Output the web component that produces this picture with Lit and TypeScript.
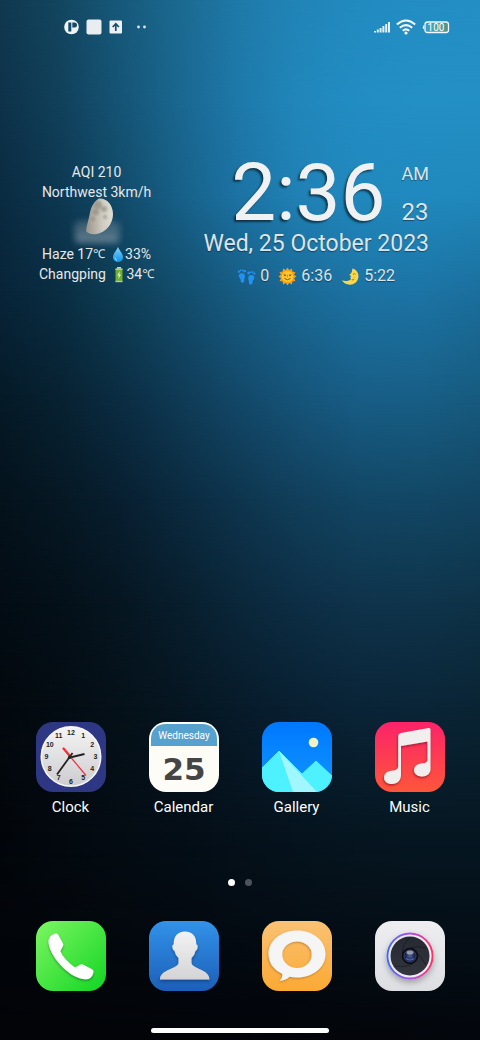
import { LitElement, html, svg, css } from "lit";
import { customElement, property } from "lit/decorators.js";

/* Horizontal colour rows of the wallpaper; each fades into the next one down the screen. */
const WALLPAPER: { at: number; colors: string[] }[] = [
  { at: 0, colors: ["#10384f", "#134660", "#17597b", "#1b6a91", "#1f7aa9", "#2185b8", "#228bc0", "#238ec3", "#238fc4"] },
  { at: 10, colors: ["#0d3249", "#11405b", "#155475", "#1a6790", "#1e79aa", "#2187bb", "#228dc3", "#238fc5", "#238fc4"] },
  { at: 19, colors: ["#0a2b41", "#0d3851", "#124b6a", "#176088", "#1c73a4", "#2081b5", "#2188bd", "#2089be", "#2088bb"] },
  { at: 28, colors: ["#082439", "#0a2e43", "#0e3e56", "#134d6c", "#175d84", "#1a6a96", "#1c73a3", "#1c74a5", "#1b6f9d"] },
  { at: 38, colors: ["#051a27", "#082232", "#0b2d43", "#0f3b56", "#13496a", "#16557b", "#185e87", "#185f87", "#175b7f"] },
  { at: 48, colors: ["#04121c", "#061824", "#081f30", "#0b2a3f", "#0e354e", "#113f5b", "#124664", "#124765", "#124562"] },
  { at: 58, colors: ["#030c14", "#041019", "#061621", "#081e2d", "#0b273a", "#0d2e45", "#0f334b", "#0f344b", "#0e3247"] },
  { at: 68, colors: ["#03090e", "#040c13", "#051119", "#061621", "#071b2a", "#092032", "#0a2437", "#0a2537", "#0a2434"] },
  { at: 80, colors: ["#02060b", "#03090f", "#040c13", "#040e17", "#05111b", "#05141f", "#061621", "#061722", "#061722"] },
  { at: 100, colors: ["#020408", "#020408", "#020409", "#03050a", "#03060c"] },
];

@customElement("wall-paper")
export class WallPaper extends LitElement {
  static styles = css`
    :host { display: grid; }
    .row { grid-area: 1 / 1; }
  `;
  render() {
    return WALLPAPER.map((row, i) => {
      const from = i ? WALLPAPER[i - 1].at : 0;
      const mask = i ? `linear-gradient(to bottom, transparent ${from}%, #000 ${row.at}%)` : "none";
      return html`<div class="row" style="background:linear-gradient(to right, ${row.colors.join(",")});mask-image:${mask}"></div>`;
    });
  }
}

const drop = svg`<svg viewBox="0 0 12 17"><defs><linearGradient id="dr" x2="0" y2="1"><stop stop-color="#7fd3fb"/><stop offset="1" stop-color="#0f92e6"/></linearGradient></defs><path fill="url(#dr)" d="M6 1C7 4 11 7.500 11 11.200A5 5 0 0 1 1 11.200C1 7.500 5 4 6 1z"/><path d="M3 11.500q.2 2.300 2 3" fill="none" stroke="#a9e4ff" stroke-width="1"/></svg>`;
const battery = svg`<svg viewBox="0 0 12 17"><rect x="4" y="1" width="4" height="2" fill="#c9d0d2"/><rect x="2.500" y="2.500" width="7" height="13.500" rx="1" fill="#6fae2f"/><rect x="2.500" y="2.500" width="7" height="1.500" fill="#b8c4b5"/><rect x="2.500" y="14.800" width="7" height="1.400" fill="#b8c4b5"/><path d="M6.500 5 4.400 9.500h1.500L5.400 13 7.900 8.400H6.300z" fill="#f2fadb"/></svg>`;
const feet = svg`<svg viewBox="0 0 20 20"><g fill="#2491ee"><path d="M2 8.200C3.500 5.800 7.300 6 8.200 8.500c.7 2-.6 3.200-.5 5 .1 2-.7 3-2 3s-2-1.200-1.900-2.900C3.900 11.700 1.200 10.600 2 8.200z"/><circle cx="2" cy="5" r="1.200"/><circle cx="3.900" cy="3.600" r="1"/><circle cx="5.700" cy="3.400" r=".9"/><circle cx="8" cy="4.300" r="1.500"/><path d="M18.200 10.200c-1.500-2.400-5.300-2.200-6.200.3-.7 2 .6 3.200.5 5-.1 2 .7 3 2 3s2-1.200 1.900-2.900c-.1-1.900 2.600-3 1.800-5.400z"/><circle cx="18.300" cy="7" r="1.200"/><circle cx="16.400" cy="5.600" r="1"/><circle cx="14.600" cy="5.400" r=".9"/><circle cx="12.300" cy="6.300" r="1.500"/></g></svg>`;
const sun = svg`<svg viewBox="0 0 20 20"><path fill="#fb9c11" d="M10 .5l1.800 2.700L14.600 1.600l.5 3.200 3.300.6-1.500 2.800L19.500 10l-2.600 1.900 1.500 2.800-3.300.5-.5 3.200-2.800-1.600L10 19.500l-1.800-2.700-2.800 1.600-.5-3.200-3.300-.5 1.500-2.800L.5 10l2.600-1.900-1.500-2.700 3.300-.6.5-3.200 2.800 1.600z"/><circle cx="10" cy="10" r="6" fill="#fdc82d"/><path d="M5.500 8.200q1.500-1.200 3 0M11.500 8.200q1.500-1.200 3 0M10 8v2.800" stroke="#d97a10" stroke-width=".8" fill="none"/><circle cx="7.300" cy="9" r=".8" fill="#59341b"/><circle cx="12.700" cy="9" r=".8" fill="#59341b"/><path d="M6.800 12q3.200 3 6.400 0" fill="none" stroke="#8b4a16" stroke-width="1"/></svg>`;
const crescent = svg`<svg viewBox="0 0 20 20"><path fill="#fcd748" d="M12 1.500c4.500 1.300 7 5.300 6.300 9.600-.8 4.600-4.500 7.500-9 7.500C5.500 18.600 2.500 16.800 1 14c3.500 1.200 7.700.7 9.600-1.500l-1.100-1.300 1-.9-.2-1.100-1.800-.8c1.700-1.100 2.700-2.500 2.900-3.400.2-1.200.6-2.300.6-3.500z"/><path d="M12.600 7.700q1.500-1.200 2.800 0M11.300 13.400q1.300.6 2.500-.4" stroke="#8c6413" stroke-width=".9" fill="none"/><circle cx="14" cy="11" r="1" fill="#f5b53b"/></svg>`;

const moonShape = "M29 2.500C37 2 43 9 43 18C43 28 36 36 27 38C21 38.800 17.500 37.500 16 35C16.500 30 18.500 24 19.500 19C20.500 12 24 5 29 2.500z";
const halfMoon = svg`<svg class="moon" viewBox="0 0 54 52">
  <defs>
    <filter id="soft" x="-30%" y="-50%" width="160%" height="200%"><feGaussianBlur stdDeviation="3"/></filter>
    <filter id="crater"><feGaussianBlur stdDeviation="1"/></filter>
    <linearGradient id="mn"><stop stop-color="#99948a"/><stop offset=".6" stop-color="#cfcbc1"/><stop offset="1" stop-color="#e0ddd3"/></linearGradient>
    <linearGradient id="hz" x2="0" y2="1"><stop stop-color="#8b9cab" stop-opacity=".15"/><stop offset="1" stop-color="#9aaab7" stop-opacity=".4"/></linearGradient>
    <clipPath id="mc"><path d=${moonShape}/></clipPath>
  </defs>
  <path filter="url(#soft)" fill="#8798a6" opacity=".4" d="M4 28q8-6 20-2 14-4 26 2v18H5z"/>
  <path fill="url(#mn)" d=${moonShape}/>
  <g clip-path="url(#mc)"><g filter="url(#crater)" fill="#8a867e" opacity=".6"><circle cx="28" cy="9" r="4"/><circle cx="34" cy="13" r="3"/><circle cx="26" cy="16" r="3"/><circle cx="35" cy="21" r="2"/><circle cx="23" cy="23" r="2"/></g></g>
  <path filter="url(#soft)" fill="url(#hz)" d="M6 36q8-5 17 2 12-3 24-1v10H7z"/>
</svg>`;

@customElement("weather-widget")
export class WeatherWidget extends LitElement {
  static styles = css`
    :host { display: block; text-align: center; font-size: 14px; line-height: 20px; color: #e4e8eb; }
    .line { display: flex; justify-content: center; align-items: center; white-space: pre; }
    .line svg { width: 12px; height: 17px; margin: 0 1px 0 4px; }
    .unit { font-size: 12px; }
    .moon { display: block; width: 54px; height: 52px; margin: -6px auto -4px; }
  `;
  render() {
    return html`
      <div class="line">AQI 210</div>
      <div class="line">Northwest 3km/h</div>
      ${halfMoon}
      <div class="line">Haze 17<span class="unit">℃ </span>${drop}33%</div>
      <div class="line">Changping ${battery}34<span class="unit">℃</span></div>
    `;
  }
}

@customElement("clock-widget")
export class ClockWidget extends LitElement {
  static styles = css`
    :host { display: block; color: #dde4ea; text-shadow: 0 1px 1px #0006; }
    .top { display: flex; justify-content: flex-end; gap: 16px; }
    .time { font-size: 80px; line-height: 62px; color: #f0f1f3; text-shadow: -2px 2px 2px #0008; }
    .side { display: flex; flex-direction: column; justify-content: space-between; font-size: 18px; line-height: 24px; }
    .sec { font-size: 24px; }
    .date { font-size: 23px; line-height: 40px; white-space: nowrap; text-align: right; }
    .stats { display: flex; justify-content: center; gap: 9px; font-size: 16px; line-height: 24px; }
    .stat { display: flex; align-items: center; gap: 4px; }
    .stat svg { width: 19px; height: 19px; }
  `;
  render() {
    return html`
      <div class="top">
        <time class="time">2:36</time>
        <div class="side"><span>AM</span><span class="sec">23</span></div>
      </div>
      <div class="date">Wed, 25 October 2023</div>
      <div class="stats">
        <span class="stat">${feet}0</span><span class="stat">${sun}6:36</span><span class="stat">${crescent}5:22</span>
      </div>
    `;
  }
}

const numerals = Array.from({ length: 12 }, (_, i) => {
  const n = i + 1;
  const a = (n * Math.PI) / 6;
  return svg`<text x=${35 + 24.5 * Math.sin(a)} y=${37 - 24.5 * Math.cos(a)}>${n}</text>`;
});

const ICONS: Record<string, unknown> = {
  clock: svg`
    <defs><linearGradient id="cf" x2="0" y2="1"><stop stop-color="#f4f4f4"/><stop offset="1" stop-color="#cdcdd0"/></linearGradient></defs>
    <rect width="70" height="70" rx="17" fill="#2e3783"/>
    <circle cx="35" cy="34.500" r="30.500" fill="#f7f7f7"/><circle cx="35" cy="34.500" r="29" fill="url(#cf)"/>
    <g font-family="Liberation Sans, sans-serif" font-size="7" font-weight="700" text-anchor="middle" fill="#222">${numerals}</g>
    <path d="M32 36 48.500 32" stroke="#222" stroke-width="2"/><path d="M36.500 31 21 52.500" stroke="#222" stroke-width="1.800"/>
    <path d="M27 26 50 53.500" stroke="#f0303a" stroke-width="1.200"/><path d="M27 26l7 8" stroke="#f0303a" stroke-width="2.200"/><circle cx="34" cy="35" r="1.800" fill="#222"/>`,
  calendar: svg`
    <rect width="70" height="70" rx="17" fill="#fdfcf6"/>
    <path d="M2 24V17C2 8 8 2 17 2H53C62 2 68 8 68 17V24z" fill="#57a1ce"/>
    <text x="35" y="17" font-size="10" text-anchor="middle" fill="#fff">Wednesday</text>
    <text x="35" y="58" font-family="DejaVu Sans, sans-serif" font-size="31" font-weight="700" text-anchor="middle" fill="#454545">25</text>`,
  gallery: svg`
    <defs><clipPath id="gc"><rect width="70" height="70" rx="17"/></clipPath><linearGradient id="gb" x2="0" y2="1"><stop stop-color="#0078ff"/><stop offset="1" stop-color="#1196ff"/></linearGradient></defs>
    <g clip-path="url(#gc)"><rect width="70" height="70" fill="url(#gb)"/>
    <path d="M0 46 17 29 40 52 54 39 70 54V70H0z" fill="#4df1ff" stroke="#4df1ff"/><path d="M17 29 55 70H31z" fill="#a1f7ff"/></g>
    <circle cx="51.500" cy="20.500" r="4.800" fill="#eff3c6"/>`,
  music: svg`
    <defs><linearGradient id="mb" x2="0" y2="1"><stop stop-color="#fc2369"/><stop offset="1" stop-color="#fe563a"/></linearGradient><filter id="ms"><feDropShadow dx="-.5" dy="1.500" stdDeviation="1.200" flood-color="#7a0020" flood-opacity=".6"/></filter></defs>
    <rect width="70" height="70" rx="17" fill="url(#mb)"/>
    <path filter="url(#ms)" fill="#f1eeee" d="M26 11 53.500 6q2-.4 2 1.500V47c0 4.500-3.500 7.500-8.500 7.500-4.500 0-8-2.500-8-6.200 0-4 3.200-6.300 7.300-6.800 4-.3 6.200-1 6.200-4V19.500L26 24V53c0 5-3.600 9-9 9-4.700 0-8-2.600-8-6.300 0-4 3.200-6.500 7.500-6.900 4-.3 6.700-1.200 6.700-5V14.500c0-2 .8-3.100 2.800-3.500z"/>`,
  phone: svg`
    <defs><linearGradient id="pb" x2="1" y2="1"><stop stop-color="#7df663"/><stop offset="1" stop-color="#12d522"/></linearGradient><filter id="ps"><feDropShadow dx="0" dy="1.500" stdDeviation="1" flood-color="#064d09" flood-opacity=".5"/></filter></defs>
    <rect width="70" height="70" rx="17" fill="url(#pb)"/>
    <path filter="url(#ps)" fill="#fff" d="M19 12.500Q21 12 22.200 13.800L27 22.500Q27.800 24 26.800 25.500L24.300 30Q25.500 34 30 38.800Q35 44 39 46.500L44.500 43.500Q45.500 43 46.800 43.500L56.500 48.500Q58.300 50 57.200 52.500Q55.500 57.500 51 58.300C43 59 33 53 25 44.500C17 36 12 26 12.500 19.500Q13 14.500 19 12.500z"/>`,
  contacts: svg`
    <defs><linearGradient id="kb" x2="0" y2="1"><stop stop-color="#3292e9"/><stop offset="1" stop-color="#1c5fb8"/></linearGradient><linearGradient id="kp" x2="0" y2="1"><stop stop-color="#f2f2f3"/><stop offset="1" stop-color="#d4d4d6"/></linearGradient><filter id="ks"><feDropShadow dx="0" dy="2" stdDeviation="1.800" flood-color="#04204d" flood-opacity=".45"/></filter></defs>
    <rect width="70" height="70" rx="17" fill="url(#kb)"/>
    <path filter="url(#ks)" fill="url(#kp)" d="M36 10.500C43.500 10.500 47.500 15.500 47.300 23.500Q49 23.500 48.600 26.500Q48.200 29.300 46.700 29.500Q45.800 34 42.500 37V42C44 48.500 60.500 48 60.500 58.500H11C11 48 28 48.500 29.500 42V37Q26.200 34 25.300 29.500Q23.800 29.300 23.400 26.500Q23 23.500 24.700 23.500C24.500 15.500 28.500 10.500 36 10.500z"/>`,
  messages: svg`
    <defs><linearGradient id="eb" x2="0" y2="1"><stop stop-color="#fac274"/><stop offset="1" stop-color="#fba933"/></linearGradient><filter id="es"><feDropShadow dx="-.5" dy="1" stdDeviation="1" flood-color="#8a4c00" flood-opacity=".5"/></filter></defs>
    <rect width="70" height="70" rx="17" fill="url(#eb)"/>
    <path filter="url(#es)" fill="#f5f5f5" fill-rule="evenodd" d="M35 9.500C51 9.500 63.500 19.500 63.500 33C63.500 46.500 51 56.500 35 56.500Q31 56.500 27.500 55.800Q24 59.500 17.500 59.800Q20.500 57 20.500 53C12 49 6.500 42 6.500 33C6.500 19.500 19 9.500 35 9.500zM35 20.500A14.700 13.200 0 1 0 35 46.900A14.700 13.200 0 1 0 35 20.500z"/>`,
  camera: svg`
    <defs><linearGradient id="vb" x2="0" y2="1"><stop stop-color="#eeeef1"/><stop offset="1" stop-color="#dcdee2"/></linearGradient>
    <linearGradient id="vr"><stop stop-color="#3b6bff"/><stop offset=".5" stop-color="#b14fe9"/><stop offset="1" stop-color="#fb3361"/></linearGradient>
    <linearGradient id="vd" x2="0" y2="1"><stop stop-color="#252932"/><stop offset="1" stop-color="#34363e"/></linearGradient>
    <radialGradient id="vl"><stop stop-color="#4a5f9f"/><stop offset=".5" stop-color="#222c52"/><stop offset=".75" stop-color="#10121c"/><stop offset="1" stop-color="#08090d"/></radialGradient><filter id="vs" x="-30%" y="-30%" width="160%" height="160%"><feDropShadow dx="0" dy="3" stdDeviation="3" flood-opacity=".3"/></filter></defs>
    <rect width="70" height="70" rx="17" fill="url(#vb)"/>
    <circle filter="url(#vs)" cx="35" cy="35" r="23.500" fill="url(#vr)"/><circle cx="35" cy="35" r="21.600" fill="#ececf0"/>
    <circle cx="35" cy="35" r="19.500" fill="url(#vd)"/>
    <path d="M35 16Q27 24 27.500 32M51 27Q42 24 35 27M51 44Q47 37 42 32M20 45Q30 47 38 43" fill="none" stroke="#12141a" stroke-width=".6"/>
    <circle cx="35" cy="35" r="8.300" fill="url(#vl)"/><circle cx="35" cy="35" r="6" fill="none" stroke="#45538a" stroke-width=".7"/>
    <ellipse cx="35" cy="31.500" rx="3.500" ry="2" fill="#c2c2ce" opacity=".7"/><path d="M31 37.500q4 3 8 0" stroke="#4d66c4" stroke-width="1.200" fill="none"/>`,
};

@customElement("app-icon")
export class AppIcon extends LitElement {
  @property() icon = "";
  @property() name = "";
  @property({ type: Boolean }) labelled = false;
  static styles = css`
    :host { display: flex; justify-content: center; }
    .app { display: flex; flex-direction: column; align-items: center; gap: 4px; padding: 0; border: 0; background: none; color: #fff; font: inherit; font-size: 15px; line-height: 23px; cursor: pointer; }
    .art { display: block; width: 70px; height: 70px; }
  `;
  render() {
    return html`<button class="app" aria-label=${this.name}>
      <svg class="art" viewBox="0 0 70 70" aria-hidden="true">${ICONS[this.icon]}</svg>
      ${this.labelled ? html`<span>${this.name}</span>` : ""}
    </button>`;
  }
}

@customElement("status-bar")
export class StatusBar extends LitElement {
  static styles = css`
    :host { display: flex; justify-content: space-between; align-items: center; height: 16px; padding: 19px 30px 0 64px; }
    .group { display: flex; align-items: center; gap: 7px; }
    .group.system { gap: 6px; }
    svg { display: block; height: 16px; }
  `;
  render() {
    return html`
      <div class="group">
        <svg width="15" viewBox="0 0 15 16"><circle cx="7.500" cy="8" r="7.300" fill="#f0f3f5"/><path d="M4.300 3.500h3v9h-3z" fill="#15496a"/><path d="M8.300 3.500h2.200a2.400 2.400 0 0 1 0 5H8.300z" fill="#15496a"/></svg>
        <svg width="16" viewBox="0 0 16 16"><rect x=".5" y=".5" width="15" height="15" rx="2" fill="#e9edf1"/></svg>
        <svg width="14" viewBox="0 0 14 16"><rect x=".5" y="1.500" width="12.500" height="13" rx="1" fill="#eef1f4"/><path d="M6.800 12V5M3.700 8 6.800 4.800 9.900 8" fill="none" stroke="#165174" stroke-width="1.700"/></svg>
        <svg width="26" viewBox="0 0 26 16"><circle cx="8.500" cy="8" r="1.400" fill="#dfe8ee"/><circle cx="14.500" cy="8" r="1.400" fill="#dfe8ee"/></svg>
      </div>
      <div class="group system">
        <svg width="16" viewBox="0 0 16 16"><path d="M1 13.500v-1.500M3.800 13.500v-3M6.600 13.500V9M9.400 13.500V7M12.200 13.500V5M15 13.500V3" stroke="#e4f1f8" stroke-width="2"/></svg>
        <svg width="20" viewBox="0 0 20 16"><g fill="none" stroke="#f4fafd" stroke-width="2"><path d="M.8 5.500Q10-2.500 19.200 5.500"/><path d="M3.800 8.800Q10 3.400 16.200 8.800"/><path d="M6.700 11.800Q10 9 13.300 11.800"/></g><circle cx="10" cy="14" r="1.600" fill="#f4fafd"/></svg>
        <svg width="28" viewBox="0 0 28 16"><defs><linearGradient id="bt"><stop stop-color="#3f9bc6"/><stop offset=".65" stop-color="#4fa398"/><stop offset="1" stop-color="#5d8a7a"/></linearGradient></defs><rect x="3" y="3" width="23.500" height="10.500" rx="2.500" fill="url(#bt)" stroke="#eff8fc" stroke-width="1.300"/><path d="M2.200 6v4.500Q.8 10.200.8 8.200T2.200 6z" fill="#eff8fc"/><text x="14" y="12" text-anchor="middle" font-size="10" fill="#fff">100</text></svg>
      </div>
    `;
  }
}

@customElement("app-root")
export class AppRoot extends LitElement {
  static styles = css`
    :host { display: grid; min-height: 100vh; font-family: Roboto, "Noto Sans", sans-serif; overflow: hidden; background: #020409; }
    wall-paper, .screen { grid-area: 1 / 1; }
    .screen { display: flex; flex-direction: column; min-width: 0; z-index: 1; }
    .widgets { display: flex; justify-content: space-between; align-items: flex-start; padding: 127px 51px 0 39px; }
    .apps { display: grid; grid-template-columns: repeat(4, 1fr); padding: 0 14px; margin-top: auto; }
    .pages { display: flex; justify-content: center; gap: 10px; padding: 60px 0 35px; }
    .page { width: 7px; height: 7px; border-radius: 50%; background: #4c535b; }
    .page.current { background: #fff; }
    .dock { margin-top: 0; }
    .home { width: 37%; height: 5px; margin: 37px auto 7px; border-radius: 3px; background: #fff; }
  `;
  render() {
    return html`
      <wall-paper></wall-paper>
      <main class="screen">
        <status-bar></status-bar>
        <section class="widgets">
          <weather-widget></weather-widget>
          <clock-widget></clock-widget>
        </section>
        <nav class="apps" aria-label="Apps">
          <app-icon icon="clock" name="Clock" labelled></app-icon>
          <app-icon icon="calendar" name="Calendar" labelled></app-icon>
          <app-icon icon="gallery" name="Gallery" labelled></app-icon>
          <app-icon icon="music" name="Music" labelled></app-icon>
        </nav>
        <div class="pages"><span class="page current"></span><span class="page"></span></div>
        <nav class="apps dock" aria-label="Dock">
          <app-icon icon="phone" name="Phone"></app-icon>
          <app-icon icon="contacts" name="Contacts"></app-icon>
          <app-icon icon="messages" name="Messages"></app-icon>
          <app-icon icon="camera" name="Camera"></app-icon>
        </nav>
        <div class="home"></div>
      </main>
    `;
  }
}
